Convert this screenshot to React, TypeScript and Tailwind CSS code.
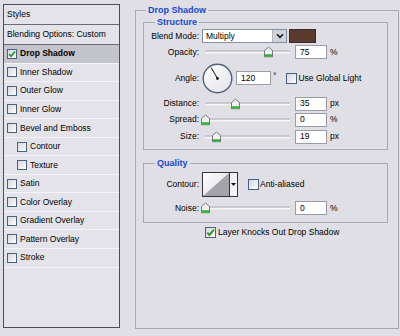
import React from "react";

function Check({ checked = false, size = 11 }: { checked?: boolean; size?: number }) {
  return (
    <span
      className="inline-flex shrink-0 items-center justify-center border border-[#4a6282] bg-linear-to-br from-[#d6d6dc] to-[#ffffff]"
      style={{ width: size, height: size }}
    >
      {checked && (
        <svg width={size - 2} height={size - 2} viewBox="0 0 9 9">
          <path d="M1.2 4.6 L3.5 7 L7.8 1.6" stroke="#1f9e1f" strokeWidth="1.9" fill="none" />
        </svg>
      )}
    </span>
  );
}

function Thumb({ left }: { left: number }) {
  return (
    <svg
      width="9"
      height="11"
      viewBox="0 0 9 11"
      className="absolute top-1/2 -translate-y-1/2"
      style={{ left }}
    >
      <path d="M4.5 0.5 L8.5 4 L8.5 10.5 L0.5 10.5 L0.5 4 Z" fill="#f2f2f2" stroke="#777780" />
      <rect x="1" y="7.8" width="7" height="2.4" fill="#2db02d" />
    </svg>
  );
}

function Slider({ left }: { left: number }) {
  return (
    <div className="relative w-[91px] h-full shrink-0">
      <div className="absolute left-[4px] w-[85px] top-1/2 -translate-y-1/2 h-[3px] border-t border-[#a2a2aa] bg-[#f6f6f6]" />
      <Thumb left={left} />
    </div>
  );
}

function Input({ value, w = 32 }: { value: string; w?: number }) {
  return (
    <div
      className="h-[14px] shrink-0 bg-white border border-[#9c9ca6] pl-[4px] flex items-center leading-none"
      style={{ width: w }}
    >
      {value}
    </div>
  );
}

function SliderRow({ label, h, thumb, value, unit }: { label: string; h: number; thumb: number; value: string; unit: string }) {
  return (
    <div className="flex items-center" style={{ height: h }}>
      <div className="w-[55px] shrink-0 text-right">{label}</div>
      <div className="ml-[2px] h-full flex items-center">
        <Slider left={thumb} />
      </div>
      <div className="ml-[3px]">
        <Input value={value} />
      </div>
      <div className="ml-[3px]">{unit}</div>
    </div>
  );
}

const items: { label: string; checked?: boolean; selected?: boolean; indent?: boolean }[] = [
  { label: "Drop Shadow", checked: true, selected: true },
  { label: "Inner Shadow" },
  { label: "Outer Glow" },
  { label: "Inner Glow" },
  { label: "Bevel and Emboss" },
  { label: "Contour", indent: true },
  { label: "Texture", indent: true },
  { label: "Satin" },
  { label: "Color Overlay" },
  { label: "Gradient Overlay" },
  { label: "Pattern Overlay" },
  { label: "Stroke" },
];

export default function App() {
  return (
    <div className="w-[400px] h-[336px] bg-[#dfdfe5] flex items-start overflow-hidden font-['Liberation_Sans',Arial,sans-serif] text-[8.5px] text-black">
      {/* Left list */}
      <div className="mt-[4px] ml-[3px] w-[117px] h-[324px] shrink-0 border border-[#4d4d56] bg-[#e3e3e9] flex flex-col">
        <div className="h-[20px] border-b border-[#6a6a74] flex items-center pl-[3px]">Styles</div>
        <div className="h-[20px] border-b border-[#6a6a74] flex items-center pl-[3px]">Blending Options: Custom</div>
        {items.map((it) => (
          <div
            key={it.label}
            className={`h-[18.55px] border-b border-[#f4f4f8] flex items-center ${it.selected ? "bg-[#c4c4cc] font-bold" : ""} ${it.indent ? "pl-[13px]" : "pl-[3px]"}`}
          >
            <Check checked={it.checked} size={10} />
            <span className="ml-[3px]">{it.label}</span>
          </div>
        ))}
      </div>

      {/* Right panel */}
      <fieldset className="ml-[15px] mt-[4px] w-[264px] h-[325px] shrink-0 border border-[#a8a8b2] p-0 m-0 min-w-0">
        <legend className="ml-[10px] px-[2px] text-[9px] leading-[12px] font-bold text-[#1a48d0]">Drop Shadow</legend>
        <div className="pl-[7px] pr-[10px] flex flex-col">
          {/* Structure */}
          <fieldset className="h-[134px] border border-[#a8a8b2] p-0 m-0 min-w-0">
            <legend className="ml-[11px] px-[2px] text-[9px] leading-[12px] font-bold text-[#1a48d0]">Structure</legend>
            <div className="flex flex-col">
              <div className="h-[16px] flex items-center">
                <div className="w-[55px] shrink-0 text-right">Blend Mode:</div>
                <div className="ml-[3px] w-[85px] h-[14px] bg-white border border-[#8490a2] flex items-center">
                  <span className="pl-[3px] flex-1">Multiply</span>
                  <div className="w-[14px] h-full bg-[#d2d2da] border-l border-[#b4b4be] flex items-center justify-center">
                    <svg width="8" height="6" viewBox="0 0 8 6">
                      <path d="M1 1.2 L4 4.4 L7 1.2" stroke="#1a1a1a" strokeWidth="1.6" fill="none" />
                    </svg>
                  </div>
                </div>
                <div className="ml-[2px] w-[27px] h-[14px] bg-[#5a3b2e] border border-[#2e2e34]" />
              </div>
              <SliderRow label="Opacity:" h={16} thumb={63} value="75" unit="%" />
              <div className="h-[36px] flex items-center">
                <div className="w-[55px] shrink-0 text-right">Angle:</div>
                <svg width="31" height="31" viewBox="0 0 31 31" className="ml-[3px] shrink-0">
                  <defs>
                    <linearGradient id="dial" x1="0" y1="0" x2="1" y2="1">
                      <stop offset="0" stopColor="#ffffff" />
                      <stop offset="1" stopColor="#e2e2e8" />
                    </linearGradient>
                  </defs>
                  <circle cx="15.5" cy="15.5" r="14.3" fill="url(#dial)" stroke="#51607e" strokeWidth="1.4" />
                  <line x1="15.5" y1="15.5" x2="9.2" y2="4.6" stroke="#111" strokeWidth="1" />
                  <circle cx="15.5" cy="15.5" r="1.4" fill="#111" />
                </svg>
                <div className="ml-[3px]">
                  <Input value="120" w={35} />
                </div>
                <div className="ml-[2px] self-start mt-[10px]">°</div>
                <div className="ml-[10px] flex items-center">
                  <Check />
                  <span className="ml-[1px]">Use Global Light</span>
                </div>
              </div>
              <SliderRow label="Distance:" h={15} thumb={30} value="35" unit="px" />
              <SliderRow label="Spread:" h={17} thumb={0} value="0" unit="%" />
              <SliderRow label="Size:" h={17} thumb={11} value="19" unit="px" />
            </div>
          </fieldset>

          {/* Quality */}
          <fieldset className="mt-[7px] h-[66px] border border-[#a8a8b2] p-0 m-0 min-w-0">
            <legend className="ml-[11px] px-[2px] text-[9px] leading-[12px] font-bold text-[#1a48d0]">Quality</legend>
            <div className="flex flex-col">
              <div className="h-[30px] flex items-center">
                <div className="w-[55px] shrink-0 text-right">Contour:</div>
                <div className="ml-[3px] w-[36px] h-[25px] border border-[#34343a] flex bg-white shrink-0">
                  <svg width="26" height="23" viewBox="0 0 26 23" className="shrink-0">
                    <defs>
                      <linearGradient id="ct" x1="0" y1="0" x2="1" y2="1">
                        <stop offset="0" stopColor="#ffffff" />
                        <stop offset="1" stopColor="#dcdce2" />
                      </linearGradient>
                    </defs>
                    <rect x="0" y="0" width="26" height="23" fill="url(#ct)" />
                    <polygon points="0,23 26,0 26,23" fill="#a3a3ab" />
                  </svg>
                  <div className="flex-1 border-l border-[#34343a] bg-[#f2f2f4] flex items-center justify-center">
                    <svg width="5" height="3" viewBox="0 0 5 3">
                      <polygon points="0,0 5,0 2.5,3" fill="#111" />
                    </svg>
                  </div>
                </div>
                <div className="ml-[10px] flex items-center">
                  <Check />
                  <span className="ml-[1px]">Anti-aliased</span>
                </div>
              </div>
              <SliderRow label="Noise:" h={18} thumb={0} value="0" unit="%" />
            </div>
          </fieldset>

          <div className="mt-[3px] h-[12px] flex items-center pl-[62px]">
            <Check checked />
            <span className="ml-[2px]">Layer Knocks Out Drop Shadow</span>
          </div>
        </div>
      </fieldset>
    </div>
  );
}
